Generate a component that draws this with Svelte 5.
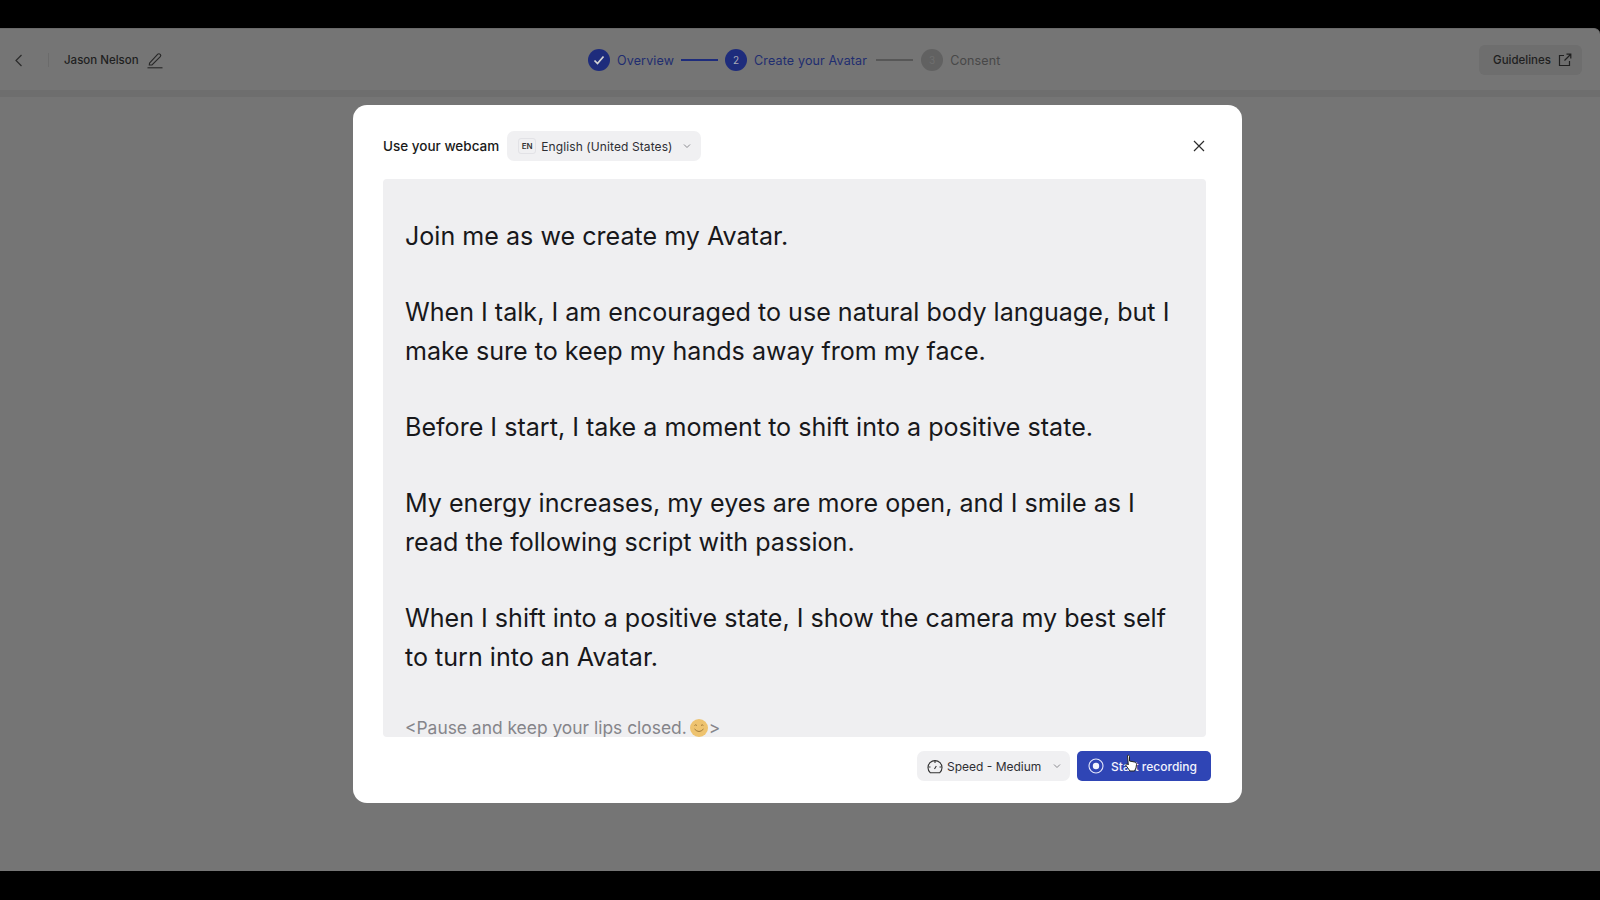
<script>
  const steps = [
    { label: 'Overview', state: 'done' },
    { label: 'Create your Avatar', num: 2, state: 'active' },
    { label: 'Consent', num: 3, state: 'todo' },
  ]
  const paragraphs = [
    'Join me as we create my Avatar.',
    'When I talk, I am encouraged to use natural body language, but I make sure to keep my hands away from my face.',
    'Before I start, I take a moment to shift into a positive state.',
    'My energy increases, my eyes are more open, and I smile as I read the following script with passion.',
    'When I shift into a positive state, I show the camera my best self to turn into an Avatar.',
  ]
</script>

<div class="screen">
  <div class="app">
    <header>
      <div class="left">
        <svg class="back" width="16" height="16" viewBox="0 0 16 16" fill="none" stroke="#2b2b2b" stroke-width="1.2"><path d="M10.500 3 5 8.500l5.500 5.500" /></svg>
        <span class="divider"></span>
        <span class="name">Jason Nelson</span>
        <svg class="pen" width="18" height="18" viewBox="0 0 18 18" fill="none" stroke="#262626" stroke-width="1.1"><path d="M3.500 12.200 11.800 3.200a1.500 1.500 0 0 1 2.200 0l.3.3a1.500 1.500 0 0 1 0 2.100L6 14H3.300z" /><path d="M1.500 16.800h15" /></svg>
      </div>
      <nav class="steps">
        {#each steps as step, i}
          {#if i > 0}
            <span class="line {step.state}"></span>
          {/if}
          <span class="step {step.state}">
            <span class="dot">
              {#if step.state === 'done'}
                <svg width="14" height="14" viewBox="0 0 14 14" fill="none" stroke="#d5d5d5" stroke-width="1.7"><path d="m2.500 7.500 3 3 6-7" /></svg>
              {:else}
                {step.num}
              {/if}
            </span>
            <span class="step-label">{step.label}</span>
          </span>
        {/each}
      </nav>
      <button class="guidelines">
        Guidelines
        <svg width="14" height="14" viewBox="0 0 14 14" fill="none" stroke="#1f1f1f" stroke-width="1.2"><path d="M6 2.500H1.500v10h10V8" /><path d="M6.500 7.500 12.500 1.500M8.500 1.200h4.300v4.300" /></svg>
      </button>
    </header>
    <div class="strip"></div>

    <div class="content">
      <div class="modal">
        <div class="modal-head">
          <h2>Use your webcam</h2>
          <button class="select lang">
            <span class="badge">EN</span>
            <span class="label">English (United States)</span>
            <svg class="chev" width="8" height="6" viewBox="0 0 8 6" fill="none" stroke="#8a8a8f" stroke-width="1"><path d="m1 1.500 3 3 3-3" /></svg>
          </button>
          <svg class="close" width="12" height="12" viewBox="0 0 12 12" fill="none" stroke="#2c2c2c" stroke-width="1.2"><path d="m1 1 10 10M11 1 1 11" /></svg>
        </div>

        <div class="script">
          {#each paragraphs as p}
            <p>{p}</p>
          {/each}
          <p class="note">&lt;Pause and keep your lips closed.<svg class="smile" width="18" height="18" viewBox="0 0 18 18"><circle cx="9" cy="9" r="9" fill="#eec36f" /><path d="M4.500 6.500q1.200-1.400 2.400 0M11 6.500q1.200-1.400 2.400 0" fill="none" stroke="#a07a3a" stroke-width="1" /><path d="M4.500 10q4.500 5 9 0" fill="none" stroke="#a07a3a" stroke-width="1" /></svg>&gt;</p>
        </div>

        <div class="modal-foot">
          <button class="select speed">
            <svg class="gauge" width="16" height="15" viewBox="0 0 16 15" fill="none" stroke="#333" stroke-width="1.1"><path d="M3.200 13.700A7 7 0 1 1 12.800 13.700Z" /><path d="M8 1.200v2.800M1.500 8h2M12.500 8h2M7.500 10l1.800-3" /></svg>
            <span class="label">Speed - Medium</span>
            <svg class="chev" width="8" height="6" viewBox="0 0 8 6" fill="none" stroke="#8a8a8f" stroke-width="1"><path d="m1 1.500 3 3 3-3" /></svg>
          </button>
          <button class="record">
            <svg width="16" height="16" viewBox="0 0 16 16"><circle cx="8" cy="8" r="7" fill="none" stroke="#e4e7fa" stroke-width="1.1" /><circle cx="8" cy="8" r="3.200" fill="#f2f3fd" /></svg>
            Start recording
            <svg class="cursor" width="14" height="18" viewBox="0 0 14 18"><path d="M3.500 1.500c1-.6 2 0 2 1v4.500l5 1c1.500.4 2 1.200 2 2.500l-.5 3.500-1.500 3H6l-4-5.500c-.6-1 .8-2 1.800-1l.5.500z" fill="#fff" stroke="#222" stroke-width="1" /></svg>
          </button>
        </div>
      </div>
    </div>
  </div>
</div>

<style>
  :global(body) {
    background: #000;
  }

  svg {
    flex-shrink: 0;
  }

  .screen {
    height: 900px;
    padding: 28px 0 29px;
    box-sizing: border-box;
    font-family: Inter, 'Noto Sans', sans-serif;
    overflow: hidden;
  }

  .app {
    height: 100%;
    background: #757575;
    border-top: 1px solid #6a6a6a;
    box-sizing: border-box;
    border-radius: 0 6px 0 0;
    display: flex;
    flex-direction: column;
  }

  header {
    height: 61px;
    display: flex;
    align-items: center;
    justify-content: space-between;
    padding: 0 18px 0 11px;
    position: relative;
  }

  .left {
    display: flex;
    align-items: center;
    font-size: 11.5px;
    font-weight: 500;
    color: #1f1f1f;
  }

  .divider {
    width: 1px;
    height: 14px;
    background: #6b6b6b;
    margin: 0 15px 0 21px;
  }

  .pen {
    margin-left: 7px;
  }

  .steps {
    position: absolute;
    left: 588px;
    top: 0;
    height: 100%;
    display: flex;
    align-items: center;
    font-size: 12.5px;
    letter-spacing: 0.15px;
  }

  .step {
    display: flex;
    align-items: center;
    gap: 7px;
  }

  .step-label {
    padding-top: 1px;
  }

  .dot {
    width: 22px;
    height: 22px;
    border-radius: 50%;
    display: flex;
    align-items: center;
    justify-content: center;
    font-size: 10px;
  }

  .step.done,
  .step.active {
    color: #1f2d70;
  }

  .step.done .dot,
  .step.active .dot {
    background: #1e2c7c;
    color: #a9a9b5;
  }

  .step.todo {
    color: #484848;
  }

  .step.todo .dot {
    background: #616161;
    color: #6f6f6f;
  }

  .line {
    width: 37px;
    height: 2px;
    margin: 0 7px;
    background: #1e2c7c;
  }

  .line.todo {
    margin: 0 8.500px;
    background: #575757;
  }

  .guidelines {
    height: 30px;
    padding: 0 10px 0 14px;
    border: 0;
    border-radius: 6px;
    background: #6e6e6e;
    color: #1f1f1f;
    font: 500 11.5px Inter, sans-serif;
    display: flex;
    align-items: center;
    gap: 7px;
  }

  .strip {
    height: 7px;
    background: #6e6e6e;
  }

  .content {
    flex: 1;
    padding: 8px 0 0 353px;
  }

  .modal {
    width: 889px;
    height: 698px;
    box-sizing: border-box;
    background: #fff;
    border-radius: 14px;
    padding: 26px 30px 22px 30px;
    display: flex;
    flex-direction: column;
  }

  .modal-head {
    display: flex;
    align-items: center;
    height: 30px;
    gap: 8px;
    padding-right: 1px;
  }

  h2 {
    margin: 0;
    font-size: 13.500px;
    font-weight: 500;
    color: #1a1a1a;
    white-space: nowrap;
  }

  .select {
    height: 30px;
    border: 0;
    border-radius: 7px;
    background: #f0f0f2;
    color: #2e2e33;
    font: 400 12px Inter, sans-serif;
    letter-spacing: 0.1px;
    display: flex;
    align-items: center;
    padding: 0 11px;
  }

  .label {
    white-space: nowrap;
  }

  .lang {
    width: 194px;
    gap: 5px;
  }

  .badge {
    width: 18px;
    height: 16px;
    box-sizing: border-box;
    border: 1px solid #e2e2e6;
    border-radius: 3px;
    font-size: 8px;
    font-weight: 600;
    line-height: 14px;
    text-align: center;
    color: #333;
    flex-shrink: 0;
  }

  .lang .chev {
    margin-left: 5px;
  }

  .close {
    margin-left: auto;
    margin-right: 6px;
  }

  .script {
    margin-top: 18px;
    width: 823px;
    height: 558px;
    overflow: hidden;
    box-sizing: border-box;
    background: #efeff1;
    border-radius: 4px;
    padding: 38px 22px 0;
    font-size: 25.100px;
    line-height: 38.800px;
    color: #18181b;
    flex-shrink: 0;
  }

  p {
    margin: 0 0 37.400px;
  }

  .script .note {
    margin: 0;
    font-size: 17.400px;
    line-height: 30px;
    margin-top: -1px;
    color: #85858a;
    display: flex;
    align-items: center;
    white-space: pre;
  }

  .smile {
    margin: 0 1px 0 3px;
  }

  .modal-foot {
    margin-top: 14px;
    display: flex;
    justify-content: flex-end;
    gap: 7px;
    margin-right: 1px;
  }

  .speed {
    width: 153px;
    gap: 4px;
    padding: 0 10px;
    letter-spacing: 0;
  }

  .speed .chev {
    margin-left: 8px;
  }

  .record {
    position: relative;
    width: 134px;
    height: 30px;
    border: 0;
    border-radius: 5px;
    background: #2f45b5;
    color: #f2f3fd;
    font: 500 12px Inter, sans-serif;
    white-space: nowrap;
    display: flex;
    align-items: center;
    gap: 7px;
    padding: 0 11px;
  }

  .cursor {
    position: absolute;
    left: 47px;
    top: 3px;
  }
</style>
